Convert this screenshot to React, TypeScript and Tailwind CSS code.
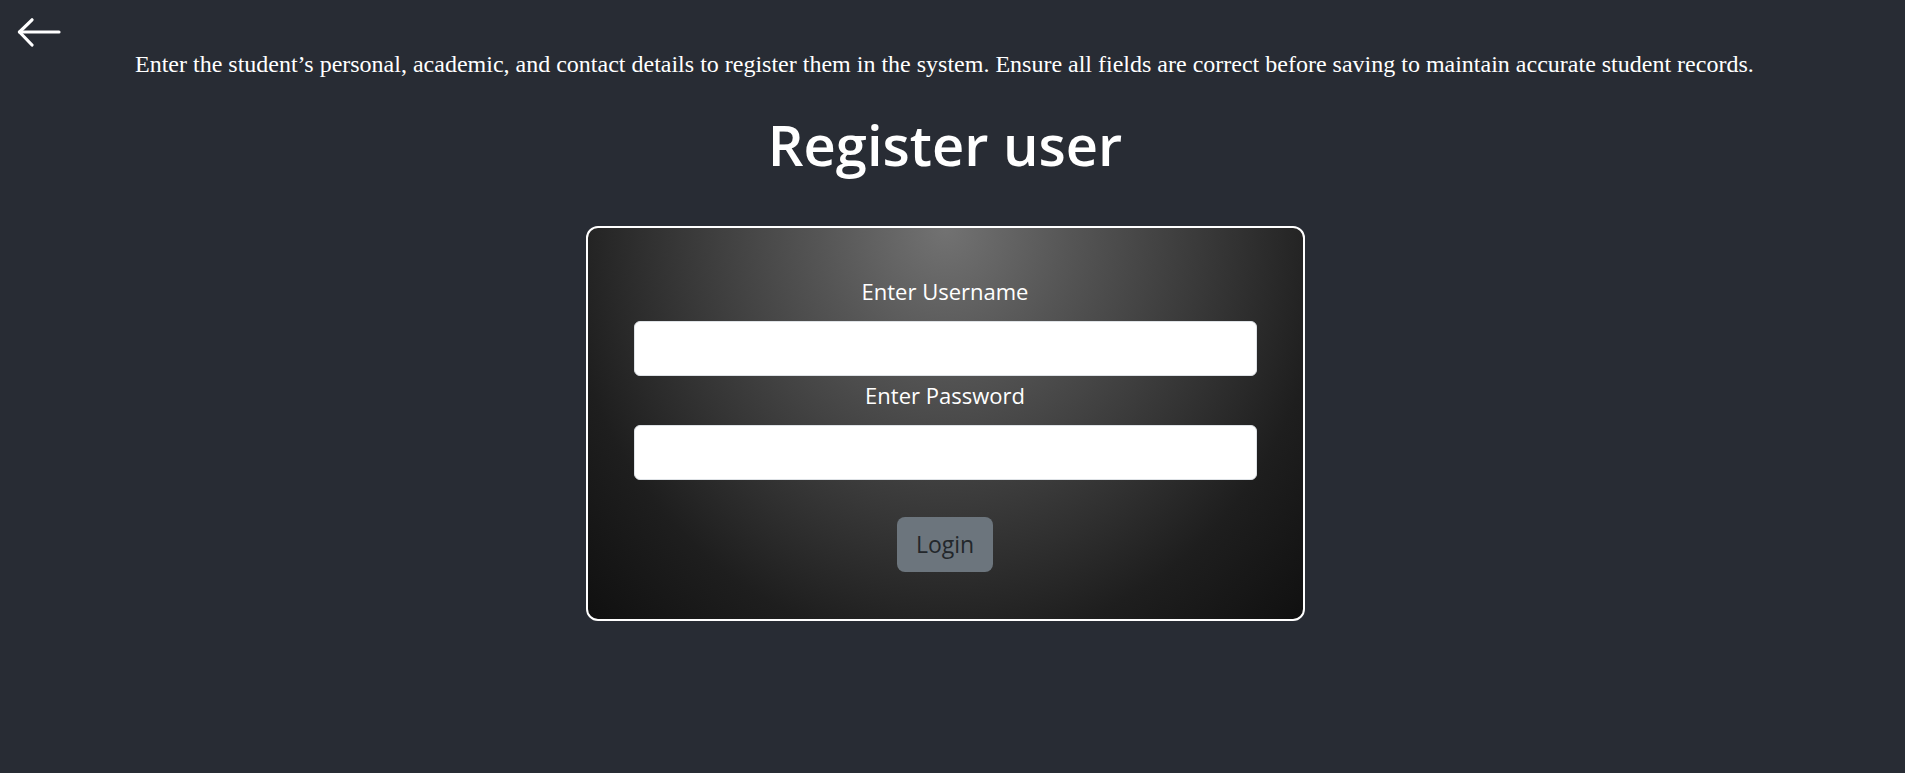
import { useState } from 'react';

function App() {
  const [username, setUsername] = useState('');
  const [password, setPassword] = useState('');

  return (
    <div className="min-h-screen bg-[#282c34] text-white">
      <div className="pl-[17px] pt-[18px]">
        <svg width="44" height="29" viewBox="0 0 44 29" fill="none" stroke="white" strokeWidth="3.2" strokeLinecap="round" strokeLinejoin="round">
          <path d="M42 14H2.5" />
          <path d="M15 1.8L2.5 14L15 27" />
        </svg>
      </div>

      <p className="pl-[135px] text-[24px] leading-[34px] font-['Liberation_Serif',serif]">
        Enter the student’s personal, academic, and contact details to register them in the system. Ensure all fields are correct before saving to maintain accurate student records.
      </p>

      <div className="pr-[15px] font-['Open_Sans',sans-serif]">
        <h1 className="mt-[35px] text-center text-[56px] leading-none font-semibold">Register user</h1>

        <div className="mt-[54px] flex justify-center">
          <form
            onSubmit={(e) => e.preventDefault()}
            className="w-[719px] rounded-[12px] border-2 border-white px-[46px] pt-[48px] pb-[47px] flex flex-col items-center bg-[radial-gradient(ellipse_at_50%_0%,#727272_0%,#555555_25%,#383838_52%,#1e1e1e_76%,#101010_100%)]"
          >
            <label className="text-[22px] leading-[30px] mb-[15px]">Enter Username</label>
            <input
              value={username}
              onChange={(e) => setUsername(e.target.value)}
              className="w-full h-[55px] bg-white rounded-[6px] border border-[#dee2e6] px-4 text-[#212529] text-[20px] outline-none mb-[4px]"
            />
            <label className="text-[22px] leading-[30px] mb-[15px]">Enter Password</label>
            <input
              type="password"
              value={password}
              onChange={(e) => setPassword(e.target.value)}
              className="w-full h-[55px] bg-white rounded-[6px] border border-[#dee2e6] px-4 text-[#212529] text-[20px] outline-none mb-[37px]"
            />
            <button
              type="submit"
              className="h-[55px] px-[19px] rounded-[8px] bg-[#6c757d] text-[#23272b] text-[23px]"
            >
              Login
            </button>
          </form>
        </div>
      </div>
    </div>
  );
}

export default App;
